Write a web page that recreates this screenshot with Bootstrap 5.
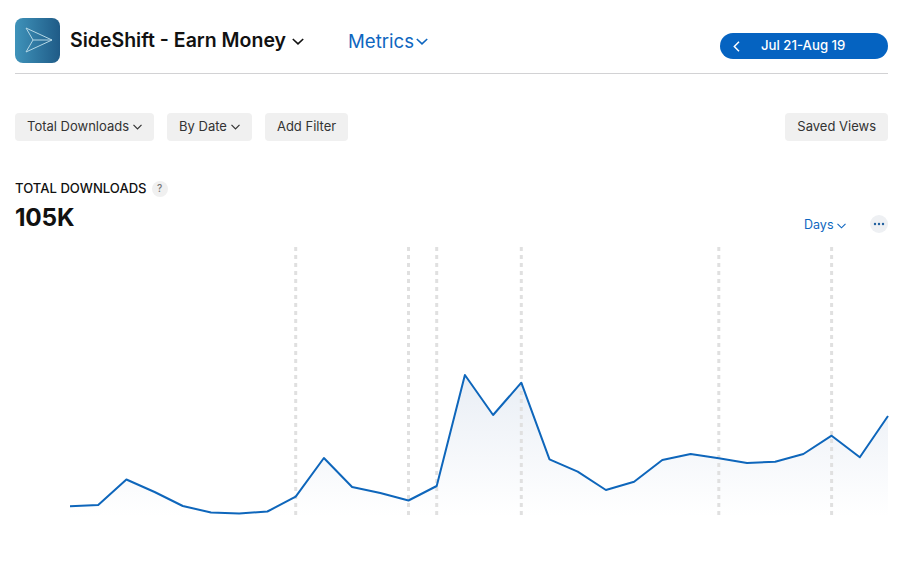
<!DOCTYPE html>
<html lang="en">
<head>
    <meta charset="UTF-8">
    <meta name="viewport" content="width=device-width, initial-scale=1.0">
    <title>Total Downloads</title>
    <link href="https://cdn.jsdelivr.net/npm/bootstrap@5.3.0/dist/css/bootstrap.min.css" rel="stylesheet">
    <style>
        body { font-family: Inter, "Liberation Sans", sans-serif; background: #fff; color: #1d1d1f; overflow: hidden; }
        .page-wrap { padding: 18px 13px 0 15px; }
        .top-bar { height: 56px; border-bottom: 1px solid #d2d2d4; }
        .app-icon { width: 45px; height: 45px; border-radius: 8px; background: linear-gradient(90deg, #3f93ba, #1f5b87); }
        .title-group { height: 46px; }
        .app-name { font-size: 19.5px; font-weight: 600; color: #111; margin-left: 10px; line-height: 1; }
        .name-chevron { margin-left: 6px; }
        .metrics-menu { font-size: 18.6px; color: #0e66c0; margin-left: 44px; text-decoration: none; line-height: 1; }
        .metrics-chevron { margin-left: 2px; }
        .date-pill { width: 168px; height: 26px; border-radius: 13px; background: #0563c1; color: #fff; font-size: 13.2px; font-weight: 500; margin-top: 15px; padding-left: 13px; }
        .date-pill span { margin-left: 21px; }
        .filter-bar { margin-top: 39px; gap: 13px; }
        .filter-btn { height: 28px; border: 0; border-radius: 4px; background: #f0f0f0; color: #333; font-size: 13px; padding: 0 12px; white-space: nowrap; gap: 4px; }
        .stat-title { font-size: 13.1px; font-weight: 500; color: #111; margin-top: 40px; height: 15px; line-height: 15px; }
        .help-dot { width: 16px; height: 16px; border-radius: 50%; background: #f0f0f0; color: #777; font-size: 10px; margin-left: 5px; }
        .stat-row { height: 30px; margin-top: 6px; }
        .stat-value { font-size: 24.4px; font-weight: 700; color: #111; line-height: 30px; letter-spacing: -.2px; }
        .days-menu { font-size: 12.5px; color: #0e66c0; text-decoration: none; margin-top: 15px; line-height: 16px; }
        .more-btn { width: 18px; height: 18px; border-radius: 50%; background: #eef0f3; margin: 13px 0 0 24px; }
        .chart-svg { display: block; margin: 8px 0 0 -15px; }
    </style>
</head>
<body>
    <div class="page-wrap">
        <div class="top-bar d-flex align-items-start">
            <div class="app-icon flex-shrink-0">
                <svg class="d-block" width="45" height="45" viewBox="0 0 45 45" fill="none" stroke="#b5d8e6" stroke-width="1" stroke-linejoin="round"><path d="M11 10 37 22 11 34 18 22Z"/><path d="M18 22H37"/></svg>
            </div>
            <div class="title-group d-flex align-items-center">
                <span class="app-name">SideShift - Earn Money</span>
                <svg class="name-chevron" width="12" height="7" viewBox="0 0 12 7" fill="none" stroke="#111" stroke-width="1.6"><path d="M.8 1 6 5.8 11.2 1"/></svg>
                <a class="metrics-menu" href="#">Metrics</a>
                <svg class="metrics-chevron flex-shrink-0" width="12" height="7" viewBox="0 0 12 7" fill="none" stroke="#0e66c0" stroke-width="1.6"><path d="M.8 1 6 5.8 11.2 1"/></svg>
            </div>
            <div class="date-pill d-flex align-items-center ms-auto">
                <svg width="7" height="11" viewBox="0 0 7 11" fill="none" stroke="#fff" stroke-width="1.5"><path d="M6 .8 1.3 5.5 6 10.2"/></svg>
                <span>Jul 21-Aug 19</span>
            </div>
        </div>

        <div class="filter-bar d-flex">
            <button class="filter-btn d-inline-flex align-items-center" type="button">Total Downloads
                <svg width="9" height="6" viewBox="0 0 9 6" fill="none" stroke="#333" stroke-width="1.2"><path d="M.5.8 4.5 4.8 8.5.8"/></svg>
            </button>
            <button class="filter-btn d-inline-flex align-items-center" type="button">By Date
                <svg width="9" height="6" viewBox="0 0 9 6" fill="none" stroke="#333" stroke-width="1.2"><path d="M.5.8 4.5 4.8 8.5.8"/></svg>
            </button>
            <button class="filter-btn" type="button">Add Filter</button>
            <button class="filter-btn ms-auto" type="button">Saved Views</button>
        </div>

        <div class="stat-title d-flex align-items-center">TOTAL DOWNLOADS <span class="help-dot d-inline-flex align-items-center justify-content-center">?</span></div>
        <div class="stat-row d-flex align-items-start">
            <div class="stat-value">105K</div>
            <a class="days-menu ms-auto" href="#">Days
                <svg width="9" height="6" viewBox="0 0 9 6" fill="none" stroke="#0e66c0" stroke-width="1.1"><path d="M.5.8 4.5 4.8 8.5.8"/></svg>
            </a>
            <div class="more-btn d-flex align-items-center justify-content-center">
                <svg width="12" height="4" viewBox="0 0 12 4" fill="#1f5f9e"><circle cx="2" cy="2" r="1.2"/><circle cx="6" cy="2" r="1.2"/><circle cx="10" cy="2" r="1.2"/></svg>
            </div>
        </div>

        <svg id="chart" class="chart-svg" width="901" height="290" viewBox="0 240 901 290"></svg>
    </div>

    <script src="https://cdn.jsdelivr.net/npm/bootstrap@5.3.0/dist/js/bootstrap.bundle.min.js"></script>
    <script>
        const values = [506.3, 505, 479.5, 492, 506, 512.5, 513.5, 511.5, 496.7, 458, 487, 493, 500.5, 486, 375, 415, 382.7, 459.3, 471.7, 490, 481.7, 460, 454, 458.3, 463, 461.7, 454, 435.7, 457.3, 416];
        const marks = [8, 12, 13, 16, 23, 27];
        const xAt = i => 70 + i * (888 - 70) / 29;
        const line = values.map((y, i) => `${xAt(i).toFixed(1)},${y}`).join(' ');

        let svg = `<defs><linearGradient id="areaFade" gradientUnits="userSpaceOnUse" x1="0" y1="375" x2="0" y2="516"><stop offset="0" stop-color="#e9eef5"/><stop offset="1" stop-color="#ffffff"/></linearGradient></defs>`;
        svg += `<polygon points="70,516 ${line} 888,516" fill="url(#areaFade)"/>`;
        marks.forEach(i => {
            svg += `<line x1="${xAt(i).toFixed(1)}" x2="${xAt(i).toFixed(1)}" y1="247" y2="515" stroke="#e0e0e0" stroke-width="3" stroke-dasharray="4 4"/>`;
        });
        svg += `<polyline points="${line}" fill="none" stroke="#0e66bb" stroke-width="2" stroke-linejoin="round"/>`;
        document.getElementById('chart').innerHTML = svg;
    </script>
</body>
</html>
